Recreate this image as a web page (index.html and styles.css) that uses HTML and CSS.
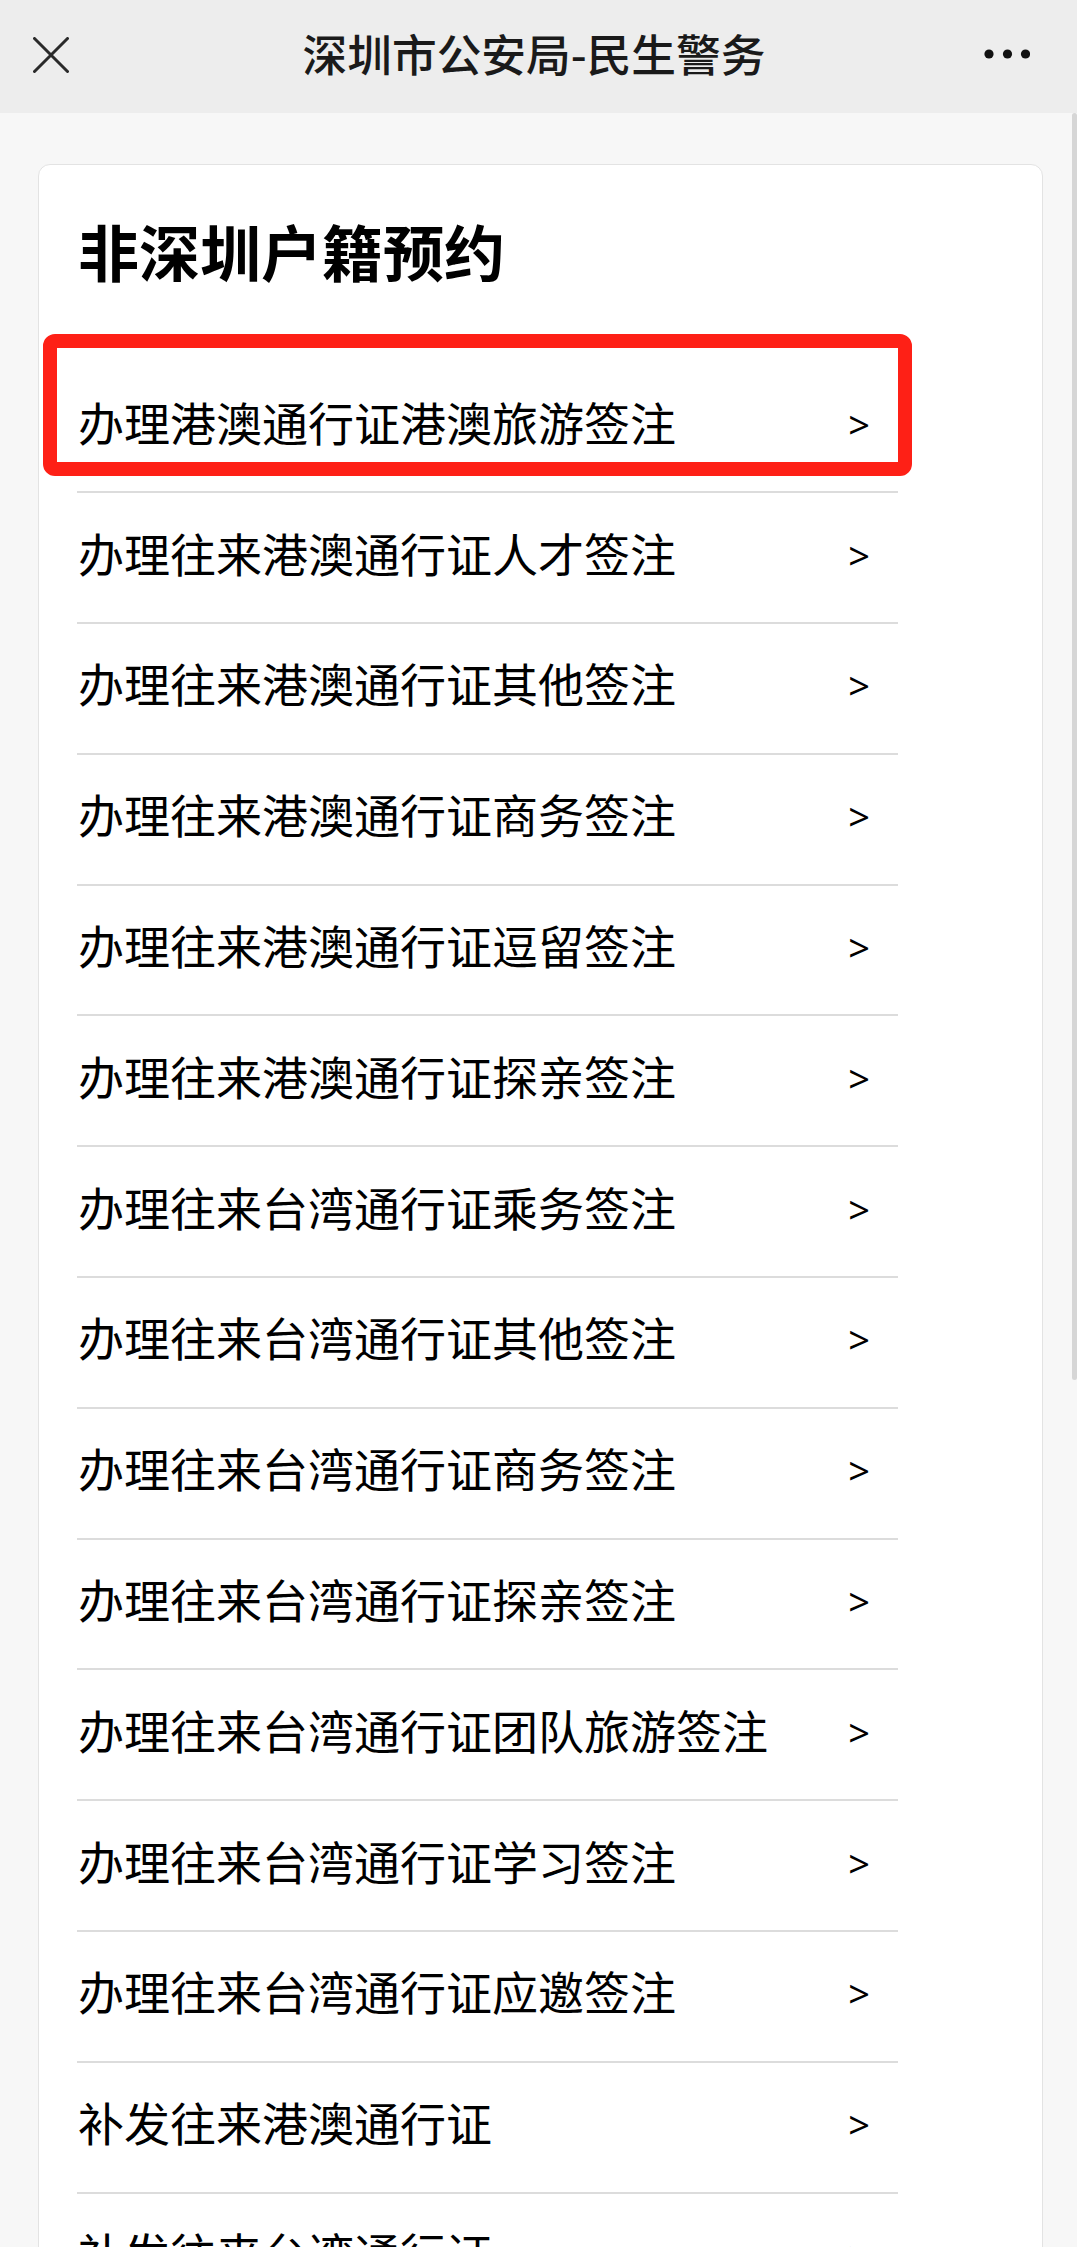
FILE: index.html
```html
<!DOCTYPE html>
<html lang="zh-CN">
<head>
<meta charset="utf-8">
<title>深圳市公安局-民生警务</title>
<link rel="stylesheet" href="styles.css">
</head>
<body>
<header class="topbar">
  <svg class="close-icon" width="36" height="36" viewBox="0 0 36 36" aria-hidden="true">
    <path d="M1.5 1.5 L34.5 34.5 M34.5 1.5 L1.5 34.5" stroke="#2a2a2a" stroke-width="3" stroke-linecap="round" fill="none"/>
  </svg>
  <h1 class="topbar-title">深圳市公安局-民生警务</h1>
  <svg class="more-icon" width="46" height="10" viewBox="0 0 46 10" aria-hidden="true">
    <circle cx="5" cy="5" r="4.6" fill="#111"/>
    <circle cx="23.5" cy="5" r="4.6" fill="#111"/>
    <circle cx="41.5" cy="5" r="4.6" fill="#111"/>
  </svg>
</header>
<main class="page">
  <section class="card">
    <h2 class="card-title">非深圳户籍预约</h2>
    <ul class="list">
      <li class="row row-highlight"><span class="row-text">办理港澳通行证港澳旅游签注</span><span class="chev">&gt;</span><span class="mark"></span></li>
      <li class="row"><span class="row-text">办理往来港澳通行证人才签注</span><span class="chev">&gt;</span></li>
      <li class="row"><span class="row-text">办理往来港澳通行证其他签注</span><span class="chev">&gt;</span></li>
      <li class="row"><span class="row-text">办理往来港澳通行证商务签注</span><span class="chev">&gt;</span></li>
      <li class="row"><span class="row-text">办理往来港澳通行证逗留签注</span><span class="chev">&gt;</span></li>
      <li class="row"><span class="row-text">办理往来港澳通行证探亲签注</span><span class="chev">&gt;</span></li>
      <li class="row"><span class="row-text">办理往来台湾通行证乘务签注</span><span class="chev">&gt;</span></li>
      <li class="row"><span class="row-text">办理往来台湾通行证其他签注</span><span class="chev">&gt;</span></li>
      <li class="row"><span class="row-text">办理往来台湾通行证商务签注</span><span class="chev">&gt;</span></li>
      <li class="row"><span class="row-text">办理往来台湾通行证探亲签注</span><span class="chev">&gt;</span></li>
      <li class="row"><span class="row-text">办理往来台湾通行证团队旅游签注</span><span class="chev">&gt;</span></li>
      <li class="row"><span class="row-text">办理往来台湾通行证学习签注</span><span class="chev">&gt;</span></li>
      <li class="row"><span class="row-text">办理往来台湾通行证应邀签注</span><span class="chev">&gt;</span></li>
      <li class="row"><span class="row-text">补发往来港澳通行证</span><span class="chev">&gt;</span></li>
      <li class="row"><span class="row-text">补发往来台湾通行证</span><span class="chev">&gt;</span></li>
    </ul>
  </section>
</main>
<div class="scrollbar"></div>
</body>
</html>
```

FILE: styles.css
```css
* { box-sizing: border-box; }

html, body {
  margin: 0;
  padding: 0;
}

body {
  width: 1077px;
  background: #f7f7f7;
  font-family: "Noto Sans CJK SC", "Noto Sans", sans-serif;
  color: #000;
  overflow: hidden;
}

.topbar {
  height: 113px;
  background: #ededed;
  display: flex;
  align-items: center;
  padding: 0 47px 7px 33px;
}

.close-icon {
  flex: none;
  margin-top: 4px;
}

.topbar-title {
  flex: 1;
  margin: 0;
  text-align: center;
  font-size: 44.7px;
  line-height: 1;
  font-weight: 500;
  color: #1a1a1a;
  padding-left: 15px;
}

.more-icon {
  flex: none;
  margin-top: 1px;
}

.page {
  padding: 51px 34px 0 38px;
}

.card {
  background: #fff;
  border: 1.5px solid #e3e3e3;
  border-radius: 12px;
  padding: 55px 0 0 38px;
  min-height: 2200px;
}

.card-title {
  margin: 0 0 81.5px;
  font-size: 61px;
  line-height: 1;
  font-weight: 700;
  padding-left: 1px;
}

.list {
  list-style: none;
  margin: 0;
  padding: 0;
  width: 821px;
}

.row {
  position: relative;
  height: 130.8px;
  border-bottom: 2px solid #dcdcdc;
  display: flex;
  align-items: center;
  justify-content: space-between;
  padding: 0 28px 12px 1px;
}

.row-text {
  font-size: 46px;
  line-height: 1;
  font-weight: 400;
  color: #000;
}

.chev {
  font-family: "Noto Sans", sans-serif;
  font-size: 38px;
  line-height: 1;
  color: #000;
  margin-top: 6px;
}

.mark {
  position: absolute;
  left: -34px;
  top: -29px;
  width: 869px;
  height: 142px;
  border: 14px solid #fe2016;
  border-radius: 12px;
  pointer-events: none;
}

.scrollbar {
  position: absolute;
  right: 0;
  top: 113px;
  width: 5px;
  height: 1267px;
  background: #d6d6d6;
  border-radius: 3px;
}
```
